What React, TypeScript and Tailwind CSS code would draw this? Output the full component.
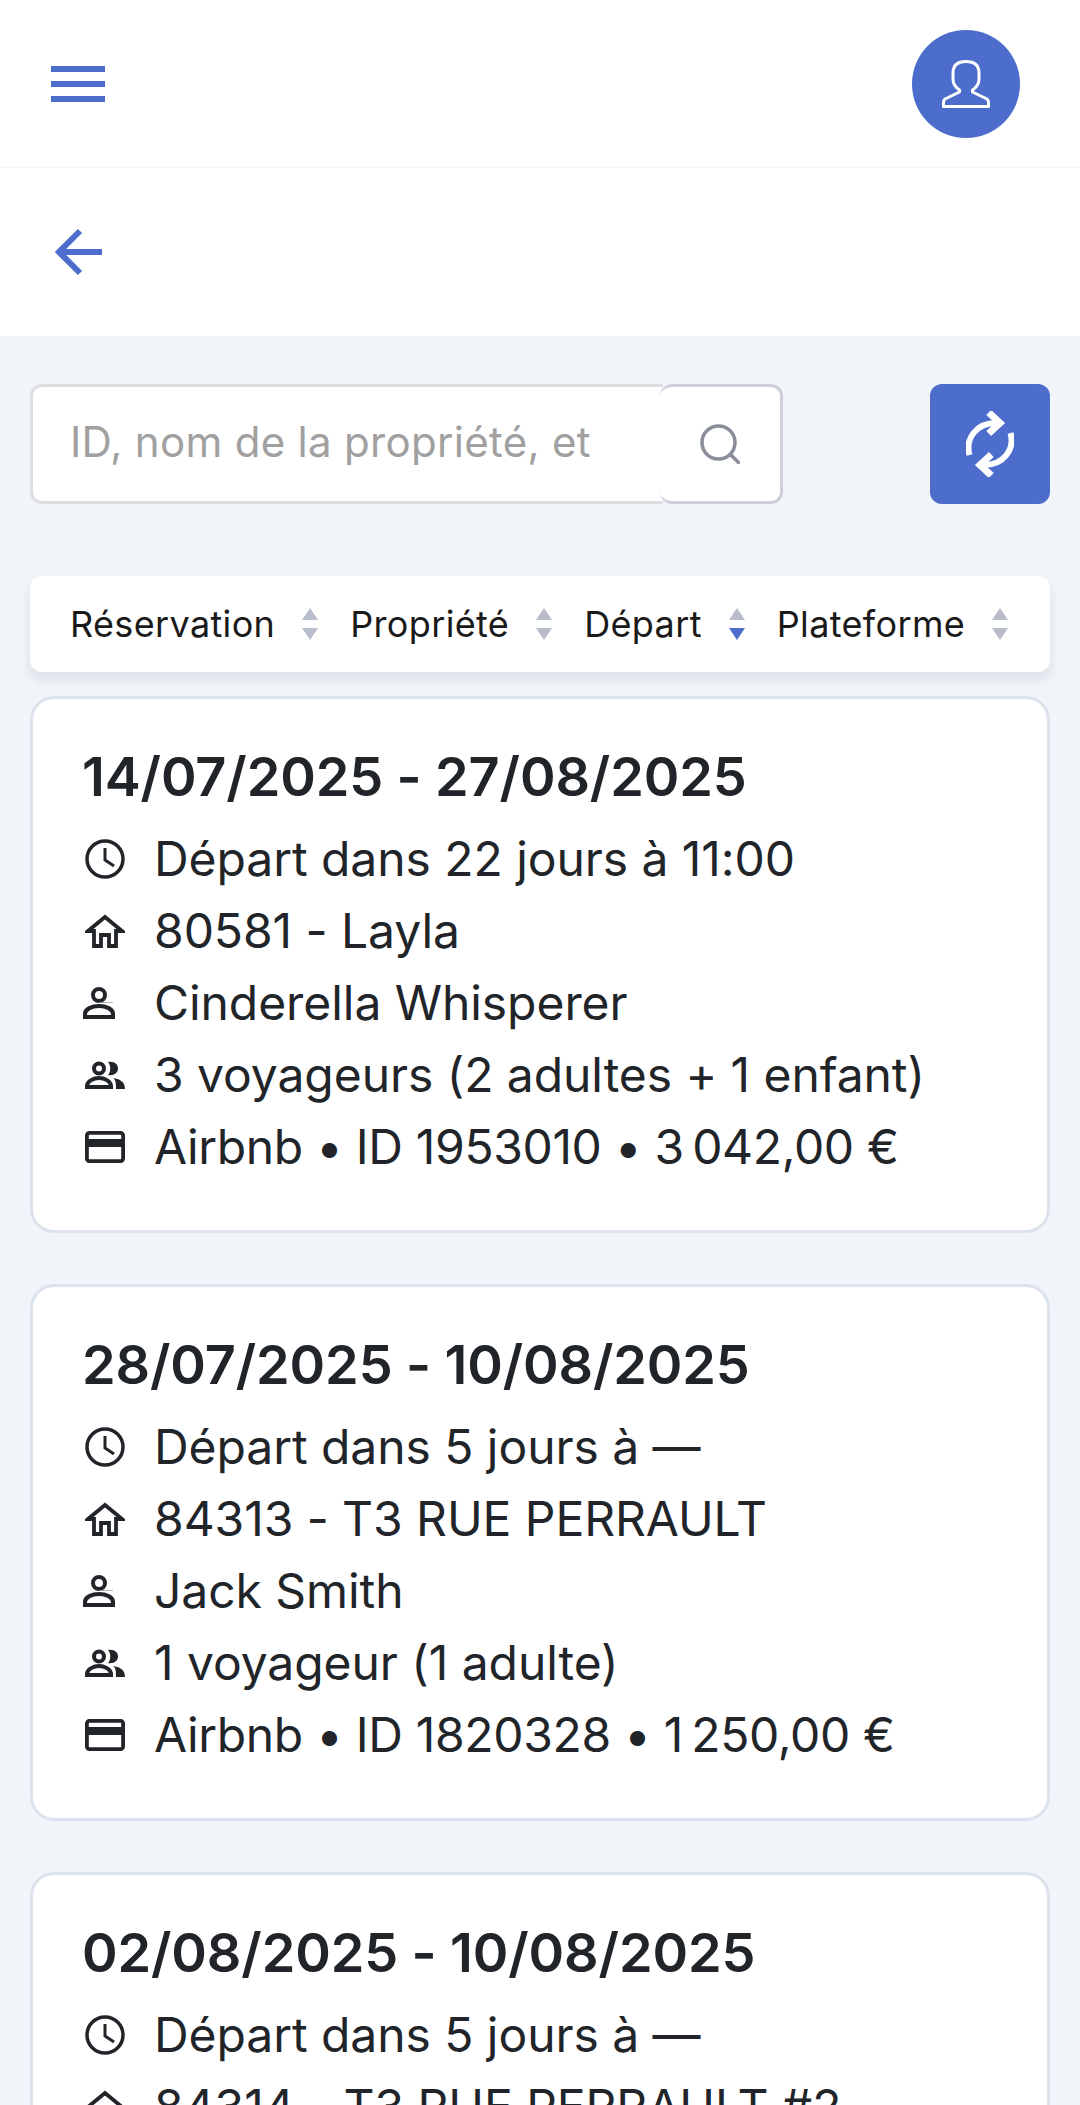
import React from "react";

const BLUE = "#4c6dcb";

function Menu() {
  return (
    <svg width="54" height="36" viewBox="0 0 54 36" fill={BLUE}>
      <rect x="0" y="0" width="54" height="6" />
      <rect x="0" y="15" width="54" height="6" />
      <rect x="0" y="30" width="54" height="6" />
    </svg>
  );
}

function Avatar() {
  return (
    <svg width="48" height="48" viewBox="0 0 48 48" fill="none" stroke="#fff" strokeWidth="3" strokeLinejoin="round">
      <path d="M24 1.500 C15 1.500 11 6 11 13 V19 C11 24 13 27 17.500 30 V32 L3 39 C1.500 40 1.500 41 1.500 43 V46.500 H46.500 V43 C46.500 41 46.500 40 45 39 L30.500 32 V30 C35 27 37 24 37 19 V13 C37 6 33 1.500 24 1.500 Z" />
    </svg>
  );
}

function Back() {
  return (
    <svg width="50" height="50" viewBox="0 0 50 50" fill="none" stroke={BLUE} strokeWidth="6">
      <path d="M28 4 L7 25 L28 46" />
      <path d="M8 25 H50" />
    </svg>
  );
}

function Search() {
  return (
    <svg width="40" height="40" viewBox="0 0 40 40" fill="none" stroke="#8a8e9a" strokeWidth="3.500" strokeLinecap="round">
      <circle cx="18.500" cy="18.500" r="16.500" />
      <path d="M31 31 L38.500 38.500" />
    </svg>
  );
}

function Refresh() {
  return (
    <svg width="48" height="66" viewBox="0 0 48 66" fill="none" stroke="#fff" strokeWidth="6">
      <path d="M3.500 44 C-1 28 10 12 30 12" />
      <path d="M22.700 1.500 L34 12 L22.700 22.500" strokeWidth="7" />
      <path d="M44.500 22 C49 38 38 54 18 54" />
      <path d="M25.300 64.500 L14 54 L25.300 43.500" strokeWidth="7" />
    </svg>
  );
}

function Sort({ active }: { active?: boolean }) {
  return (
    <svg width="16" height="32" viewBox="0 0 16 32" className="shrink-0">
      <path d="M8 0 L16 12 H0 Z" fill="#b8bccb" />
      <path d="M0 20 H16 L8 32 Z" fill={active ? BLUE : "#b8bccb"} />
    </svg>
  );
}

const ic = "#212529";

function Clock() {
  return (
    <svg width="40" height="40" viewBox="0 0 40 40" fill="none" stroke={ic} strokeWidth="3.500" className="ml-[3px]">
      <circle cx="20" cy="20" r="18" />
      <path d="M20 9 V21 L29 27" strokeWidth="3" />
    </svg>
  );
}
function Home() {
  return (
    <svg width="40" height="34" viewBox="0 0 40 34" fill="none" stroke={ic} strokeWidth="3.800" className="ml-[3px]">
      <path d="M3 17 L20 3 L37 17 H31 V32 H24 V21 H16 V32 H9 V17 Z" />
    </svg>
  );
}
function Person() {
  return (
    <svg width="32" height="32" viewBox="0 0 32 32" fill="none" stroke={ic} strokeWidth="4" className="ml-[1px]">
      <circle cx="16" cy="8" r="6" />
      <path d="M16 15.500 H30" stroke="#9a9a9a" strokeWidth="0.700" />
      <path d="M2 30 V27 C2 22 9 19 16 19 C23 19 30 22 30 27 V30 Z" />
    </svg>
  );
}
function People() {
  return (
    <svg width="40" height="28" viewBox="0 0 40 28" fill="none" stroke={ic} strokeWidth="4" className="ml-[3px]">
      <circle cx="14" cy="7.500" r="5" />
      <path d="M2 26 V25 C2 20 9 17 14 17 C19 17 26 20 26 25 V26 Z" />
      <path d="M23 1 C29 0 33 3 33 7.500 C33 12 29 15 23 14 C26 11 26 4 23 1 Z" fill={ic} stroke="none" />
      <path d="M28 17 C34 18 40 20 40 28 H31 C31 23 31 19 28 17 Z" fill={ic} stroke="none" />
    </svg>
  );
}
function CreditCard() {
  return (
    <svg width="40" height="32" viewBox="0 0 40 32" fill="none" className="ml-[3px]">
      <rect x="1.900" y="1.900" width="36.200" height="28.200" rx="2.500" stroke={ic} strokeWidth="3.800" />
      <rect x="2" y="8" width="36" height="8" fill={ic} />
    </svg>
  );
}

function Row({ icon, text, tight }: { icon: React.ReactNode; text: string; tight?: boolean }) {
  return (
    <div className="flex items-center h-[72px]">
      <div className="w-[72px] shrink-0 flex items-center">{icon}</div>
      <span className={(tight ? "tracking-[-0.35px] " : "tracking-[-0.06px] ") + "text-[48px] text-[#212529] whitespace-nowrap"}>{text}</span>
    </div>
  );
}

function Booking({ dates, lines }: { dates: string; lines: string[] }) {
  return (
    <div className="h-[537px] shrink-0 bg-white border-[3px] border-[#dde3ee] rounded-[24px] pt-[42px] pl-[49px] pr-[30px] overflow-hidden">
      <div className="text-[54px] leading-[72px] font-semibold tracking-[-0.12px] text-[#212529] whitespace-nowrap mb-[10px]">{dates}</div>
      <Row icon={<Clock />} text={lines[0]} />
      <Row icon={<Home />} text={lines[1]} />
      <Row icon={<Person />} text={lines[2]} />
      <Row icon={<People />} text={lines[3]} />
      <Row icon={<CreditCard />} text={lines[4]} tight />
    </div>
  );
}

function SortItem({ label, active }: { label: string; active?: boolean }) {
  return (
    <div className="flex items-center gap-[27px]">
      <span className="text-[36px] font-normal tracking-[0.35px] text-[#1a1a1a] whitespace-nowrap">{label}</span>
      <Sort active={active} />
    </div>
  );
}

export default function App() {
  return (
    <div className="w-[1080px] h-[2105px] overflow-hidden bg-[#f1f4f9]" style={{ fontFamily: "Inter, sans-serif" }}>
      <header className="h-[168px] bg-white border-b border-[#f7f7f8] flex items-center justify-between pl-[51px] pr-[60px]">
        <Menu />
        <div className="w-[108px] h-[108px] rounded-full bg-[#4c6dcb] flex items-center justify-center">
          <Avatar />
        </div>
      </header>
      <div className="h-[168px] bg-white flex items-center pl-[52px]">
        <Back />
      </div>
      <main className="px-[30px] pt-[48px] flex flex-col">
        <div className="flex items-stretch justify-between h-[120px]">
          <div className="flex w-[753px]">
            <input
              readOnly
              placeholder="ID, nom de la propriété, etc."
              className="w-[633px] bg-white border-[3px] border-r-0 border-[#dcdee3] rounded-l-[12px] pl-[37px] pr-[73px] pb-[5px] text-[42px] tracking-[0.3px] placeholder:text-[#a0a0a0] outline-none"
            />
            <div className="relative w-[123px] -ml-[3px] bg-white border-[3px] border-l-0 border-[#cdd0d6] rounded-[12px] flex items-center justify-center">
              <Search />
            </div>
          </div>
          <div className="w-[120px] rounded-[12px] bg-[#4c6dcb] flex items-center justify-center">
            <Refresh />
          </div>
        </div>
        <div className="mt-[72px] h-[96px] bg-white rounded-[12px] shadow-[0_8px_12px_rgba(20,30,60,0.09)] flex items-center gap-[32px] pl-[40px]">
          <SortItem label="Réservation" />
          <SortItem label="Propriété" />
          <SortItem label="Départ" active />
          <SortItem label="Plateforme" />
        </div>
        <div className="mt-[24px] flex flex-col gap-[51px]">
          <Booking
            dates="14/07/2025 - 27/08/2025"
            lines={[
              "Départ dans 22 jours à 11:00",
              "80581 - Layla",
              "Cinderella Whisperer",
              "3 voyageurs (2 adultes + 1 enfant)",
              "Airbnb • ID 1953010 • 3\u202f042,00 €",
            ]}
          />
          <Booking
            dates="28/07/2025 - 10/08/2025"
            lines={[
              "Départ dans 5 jours à —",
              "84313 - T3 RUE PERRAULT",
              "Jack Smith",
              "1 voyageur (1 adulte)",
              "Airbnb • ID 1820328 • 1\u202f250,00 €",
            ]}
          />
          <Booking
            dates="02/08/2025 - 10/08/2025"
            lines={["Départ dans 5 jours à —", "84314 - T3 RUE PERRAULT #2", "", "", ""]}
          />
        </div>
      </main>
    </div>
  );
}
